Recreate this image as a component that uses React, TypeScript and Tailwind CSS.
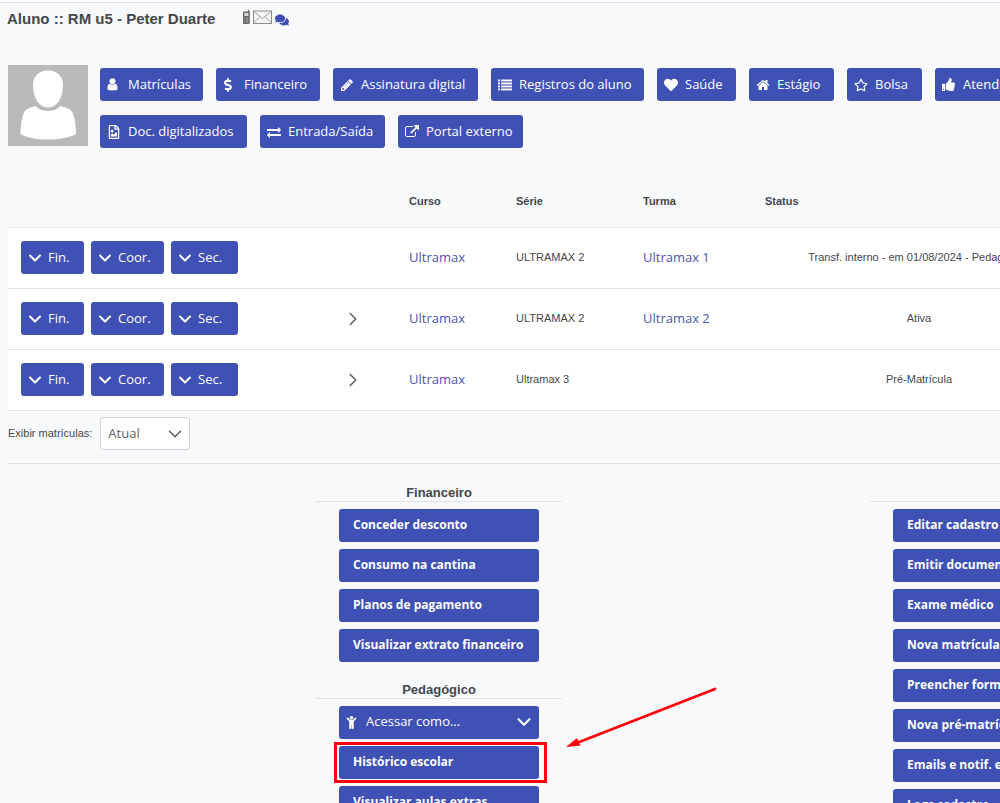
import type { ReactNode } from "react";
import { FaChild, FaComments, FaDollarSign, FaHeart, FaRegFileImage, FaRegStar, FaThumbsUp } from "react-icons/fa";
import { ChevronDown, ChevronRight } from "lucide-react";

const paths = {
  user: "M1536 1399q0 109-62.5 187t-150.5 78h-854q-88 0-150.5-78t-62.5-187q0-85 8.5-160.5t31.5-152 58.5-131 94-89 134.5-34.5q131 128 313 128t313-128q76 0 134.5 34.5t94 89 58.5 131 31.5 152 8.5 160.5zm-256-887q0 159-112.5 271.5t-271.5 112.5-271.5-112.5-112.5-271.5 112.5-271.5 271.5-112.5 271.5 112.5 112.5 271.5z",
  pencil: "M491 1536l91-91-235-235-91 91v107h128v128h107zm523-928q0-22-22-22-10 0-17 7l-542 542q-7 7-7 17 0 22 22 22 10 0 17-7l542-542q7-7 7-17zm-54-192l416 416-832 832h-416v-416zm683 96q0 53-37 90l-166 166-416-416 166-165q36-38 90-38 53 0 91 38l235 234q37 39 37 91z",
  home: "M1472 992v480q0 26-19 45t-45 19h-384v-384h-256v384h-384q-26 0-45-19t-19-45v-480q0-1 .5-3t.5-3l575-474 575 474q1 2 1 6zm223-69l-62 74q-8 9-21 11h-3q-13 0-21-7l-692-577-692 577q-12 8-24 7-13-2-21-11l-62-74q-8-10-7-23.5t11-21.5l719-599q32-26 76-26t76 26l244 204v-195q0-14 9-23t23-9h192q14 0 23 9t9 23v408l219 182q10 8 11 21.5t-7 23.5z",
  exchange: "M1792 1184v192q0 13-9.5 22.5t-22.5 9.5h-1376v192q0 13-9.5 22.5t-22.5 9.5q-12 0-24-10l-319-320q-9-9-9-22 0-14 9-23l320-320q9-9 23-9 13 0 22.5 9.5t9.5 22.5v192h1376q13 0 22.5 9.5t9.5 22.5zm0-544q0 14-9 23l-320 320q-9 9-23 9-13 0-22.5-9.5t-9.5-22.5v-192h-1376q-13 0-22.5-9.5t-9.5-22.5v-192q0-13 9.5-22.5t22.5-9.5h1376v-192q0-14 9-23t23-9q12 0 24 10l319 319q9 9 9 23z",
  external: "M1408 928v320q0 119-84.5 203.5t-203.5 84.5h-832q-119 0-203.5-84.5t-84.5-203.5v-832q0-119 84.5-203.5t203.5-84.5h704q14 0 23 9t9 23v64q0 14-9 23t-23 9h-704q-66 0-113 47t-47 113v832q0 66 47 113t113 47h832q66 0 113-47t47-113v-320q0-14 9-23t23-9h64q14 0 23 9t9 23zm384-864v512q0 26-19 45t-45 19-45-19l-176-176-652 652q-10 10-23 10t-23-10l-114-114q-10-10-10-23t10-23l652-652-176-176q-19-19-19-45t19-45 45-19h512q26 0 45 19t19 45z",
};

function Glyph({ name, size = 14 }: { name: keyof typeof paths; size?: number }) {
  return (
    <svg width={size} height={size} viewBox="0 0 1792 1792" fill="currentColor" aria-hidden="true" className="shrink-0">
      <path d={paths[name]} />
    </svg>
  );
}

function UserGlyph() {
  return (
    <svg width="11" height="13" viewBox="200 128 1400 1600" fill="currentColor" aria-hidden="true">
      <path d={paths.user} />
    </svg>
  );
}

function ListGlyph() {
  return (
    <svg width="14" height="12" viewBox="0 0 14 12" fill="currentColor" aria-hidden="true">
      {[0, 3, 6, 9].map((y) => (
        <g key={y}>
          <rect x="0" y={y + 0.5} width="2" height="1.9" />
          <rect x="3" y={y + 0.5} width="11" height="1.9" />
        </g>
      ))}
    </svg>
  );
}

const actions: { label: string; width: string; icon: ReactNode }[] = [
  { label: "Matrículas", width: "w-[103px]", icon: <UserGlyph /> },
  { label: "Financeiro", width: "w-[104px]", icon: <FaDollarSign size={14} className="-ml-0.5" /> },
  { label: "Assinatura digital", width: "w-[145px]", icon: <Glyph name="pencil" /> },
  { label: "Registros do aluno", width: "w-[153px]", icon: <ListGlyph /> },
  { label: "Saúde", width: "w-[79px]", icon: <FaHeart size={14} /> },
  { label: "Estágio", width: "w-[85px]", icon: <Glyph name="home" /> },
  { label: "Bolsa", width: "w-[75px]", icon: <FaRegStar size={14} /> },
  { label: "Atendimentos", width: "w-[126px]", icon: <FaThumbsUp size={13} /> },
  { label: "Doc. digitalizados", width: "w-[147px]", icon: <FaRegFileImage size={14} /> },
  { label: "Entrada/Saída", width: "w-[125px]", icon: <Glyph name="exchange" /> },
  { label: "Portal externo", width: "w-[125px]", icon: <Glyph name="external" /> },
];

const rows = [
  { expand: false, serie: "ULTRAMAX 2", turma: "Ultramax 1", status: "Transf. interno - em 01/08/2024 - Pedagógico" },
  { expand: true, serie: "ULTRAMAX 2", turma: "Ultramax 2", status: "Ativa" },
  { expand: true, serie: "Ultramax 3", turma: "", status: "Pré-Matrícula" },
];

const rowMenus = [
  { label: "Fin.", width: "w-[63px]" },
  { label: "Coor.", width: "w-[73px]" },
  { label: "Sec.", width: "w-[67px]" },
];

const family = "font-['Open_Sans','Noto_Sans',sans-serif]";
const button = `${family} h-[33px] shrink-0 cursor-pointer whitespace-nowrap rounded-[3px] bg-[#3f51b5] text-white hover:bg-[#3849a2]`;

function MenuButton({ label, narrow }: { label: string; narrow?: boolean }) {
  return (
    <button type="button" className={`${button} block text-left text-xs font-bold ${narrow ? "w-[200px]" : "w-full"} px-3.5`}>
      {label}
    </button>
  );
}

function Heading({ children }: { children?: ReactNode }) {
  return (
    <h2 className="h-[18px] border-b border-[#dfe1e4] text-center text-[13px] leading-[18px] font-bold">
      {children}
    </h2>
  );
}

export default function App() {
  return (
    <div className="h-screen overflow-hidden bg-[#f8f9fb] font-['Liberation_Sans',Arial,sans-serif] text-[11px] text-[#43474d]">
      <div className="min-w-[1120px] pt-0.5 pl-2">
        <header className="-ml-2 flex h-[63px] items-start border-t border-[#dfe2e6] pt-1.5 pl-[7px]">
          <h1 className="text-[15px] leading-5 font-bold">Aluno :: RM u5 - Peter Duarte</h1>
          <div className="ml-[27px] flex items-start gap-0.5">
            <svg width="9" height="16" viewBox="0 0 9 16" aria-label="Celular">
              <path d="M6.7 1v3" stroke="#555" strokeWidth="1.2" />
              <rect x="1" y="2.5" width="6.8" height="12.500" rx="1" fill="#696969" />
              <rect x="2.3" y="4" width="4" height="3" fill="#d9d9d9" />
              <path d="M2.3 9h1m1 0h2M2.3 11h1m1 0h2M2.3 13h1m1 0h2" stroke="#b6b6b6" />
            </svg>
            <svg width="20" height="15" viewBox="0 0 20 15" aria-label="E-mail">
              <rect x=".5" y="2" width="18" height="12.500" fill="#f3f3f3" stroke="#8c8c8c" />
              <path d="M1 2.5l8.5 7 8.5-7M1 13.5l6-6m11 6l-6-6" fill="none" stroke="#8c8c8c" strokeWidth=".8" />
            </svg>
            <FaComments size={14} className="mt-1 text-[#3f51b5]" />
          </div>
        </header>

        <section className="flex items-start gap-3">
          <svg width="80" height="81" viewBox="0 0 80 81" className="shrink-0" aria-label="Foto do aluno">
            <rect width="80" height="81" fill="#b9b9b9" />
            <path d="M40 5.5C31 5.5 25 11 25 20c0 11 5 22.500 15 22.500S55 31 55 20C55 11 49 5.500 40 5.500Z" fill="#fff" />
            <path d="M28 41c4 6.500 20 6.500 24 0 9 2 12 4 13.500 9 1.500 5 2.500 12 2.500 19-6 3.500-16 5.500-28 5.500S18 72.500 12.500 69c0-7 1-14 2.500-19 1.500-5 4-7 13-9Z" fill="#fff" />
          </svg>
          <nav className="flex flex-wrap gap-x-[13px] gap-y-3.5 pt-[3px]">
            {actions.map((a) => (
              <button key={a.label} type="button" className={`${button} ${a.width} flex items-center gap-[7px] pl-[7px] text-[13px]`}>
                <span className="flex w-3.5 shrink-0">{a.icon}</span>
                {a.label}
              </button>
            ))}
          </nav>
        </section>

        <table className="mt-[25px] w-full min-w-[1112px] table-fixed border-collapse text-left">
          <thead>
            <tr className="h-[54px] border-b border-[#e6e8eb]">
              <td className="w-[321px]" />
              <td className="w-[72px]" />
              <th scope="col" className="w-[107px] pt-0.5 pl-2">Curso</th>
              <th scope="col" className="w-[127px] pt-0.5 pl-2">Série</th>
              <th scope="col" className="w-[122px] pt-0.5 pl-2">Turma</th>
              <th scope="col" className="w-[324px] pt-0.5 pl-2">Status</th>
              <td />
            </tr>
          </thead>
          <tbody className="bg-white">
            {rows.map((r, i) => (
              <tr key={i} className="h-[61px] border-b border-[#e2e4e7]">
                <td className="pl-[13px]">
                  <div className="flex gap-[7px]">
                    {rowMenus.map((m) => (
                      <button key={m.label} type="button" className={`${button} ${m.width} flex items-center gap-1.5 pl-[7px] text-[13px]`}>
                        <span className="flex w-3.5 shrink-0 justify-center">
                          <ChevronDown size={20} strokeWidth={2.4} className="shrink-0" />
                        </span>
                        {m.label}
                      </button>
                    ))}
                  </div>
                </td>
                <td>
                  {r.expand && (
                    <button type="button" aria-label="Expandir matrícula" className="ml-[13px] block cursor-pointer">
                      <ChevronRight size={22} strokeWidth={1.8} className="text-[#5c636b]" />
                    </button>
                  )}
                </td>
                <td className="pl-2">
                  <a href="#curso" className={`${family} text-[13px] text-[#4b55ae]`}>Ultramax</a>
                </td>
                <td className="pl-2">{r.serie}</td>
                <td className="pl-2">
                  {r.turma && <a href="#turma" className={`${family} text-[13px] text-[#4b55ae]`}>{r.turma}</a>}
                </td>
                <td className="whitespace-nowrap text-center">{r.status}</td>
                <td />
              </tr>
            ))}
          </tbody>
        </table>

        <div className="flex h-[53px] items-center gap-2 border-b border-[#dfe1e4] pb-1.5">
          <label htmlFor="exibir">Exibir matrículas:</label>
          <div className="relative">
            <select
              id="exibir"
              defaultValue="atual"
              className={`${family} h-[33px] w-[90px] appearance-none rounded-[3px] border border-[#ced4da] bg-white pl-[7px] text-[13px] text-[#5c636b]`}
            >
              <option value="atual">Atual</option>
            </select>
            <ChevronDown size={22} strokeWidth={1.8} className="pointer-events-none absolute top-1.5 right-1 text-[#5c636b]" />
          </div>
        </div>

        <div className="flex gap-[308px] pt-5 pl-[308px]">
          <div className="w-[246px] shrink-0">
            <Heading>Financeiro</Heading>
            <div className="flex flex-col items-center gap-[7px] pt-[7px]">
              <MenuButton narrow label="Conceder desconto" />
              <MenuButton narrow label="Consumo na cantina" />
              <MenuButton narrow label="Planos de pagamento" />
              <MenuButton narrow label="Visualizar extrato financeiro" />
            </div>
            <div className="pt-[19px]">
              <Heading>Pedagógico</Heading>
            </div>
            <div className="flex flex-col items-center gap-[7px] pt-[7px]">
              <button type="button" className={`${button} flex w-[200px] items-center gap-2 pr-1 pl-1.5 text-[13px]`}>
                <FaChild size={13} />
                <span className="flex-1 text-left">Acessar como...</span>
                <ChevronDown size={22} strokeWidth={2.3} />
              </button>
              <div className="relative">
                <MenuButton narrow label="Histórico escolar" />
                <div className="pointer-events-none absolute -top-1 -right-2 -bottom-1 -left-[5px] border-[3px] border-[#ff0008]" />
                <svg width="152" height="62" viewBox="0 0 152 62" className="pointer-events-none absolute -top-[59px] left-[227px]" aria-hidden="true">
                  <path d="M12 55.500L149 2" stroke="#ff0008" strokeWidth="2.800" strokeLinecap="round" />
                  <path d="M0 60L11 51L14.500 58.500Z" fill="#ff0008" />
                </svg>
              </div>
              <MenuButton narrow label="Visualizar aulas extras" />
            </div>
          </div>

          <div className="w-[370px] shrink-0">
            <Heading />
            <div className="flex flex-col gap-[7px] px-[23px] pt-[7px]">
              <MenuButton label="Editar cadastro" />
              <MenuButton label="Emitir documentos" />
              <MenuButton label="Exame médico" />
              <MenuButton label="Nova matrícula" />
              <MenuButton label="Preencher formulário" />
              <MenuButton label="Nova pré-matrícula" />
              <MenuButton label="Emails e notif. enviados" />
              <MenuButton label="Logs cadastro" />
            </div>
          </div>
        </div>
      </div>
    </div>
  );
}
